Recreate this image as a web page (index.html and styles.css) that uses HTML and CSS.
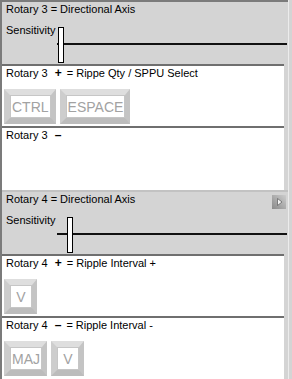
FILE: index.html
```html
<!DOCTYPE html>
<html lang="en">
<head>
<meta charset="UTF-8">
<title>Rotary mapping</title>
<link rel="stylesheet" href="styles.css">
</head>
<body>
	<div class="frame">
		<div class="panel">
			<div class="axis axis-first">
				<div class="axis-title"><span>Rotary 3 = Directional Axis</span></div>
				<div class="sens">
					<span class="sens-label">Sensitivity</span>
					<div class="slider"><span class="thumb" style="left:1px"></span></div>
				</div>
			</div>
			<div class="binding">
				<div class="binding-title">Rotary 3 <b class="sign">+</b> = Rippe Qty / SPPU Select</div>
				<div class="keys">
					<span class="key">CTRL</span>
					<span class="key">ESPACE</span>
				</div>
			</div>
			<div class="binding binding-empty">
				<div class="binding-title">Rotary 3 <b class="sign">&ndash;</b></div>
			</div>

			<div class="axis">
				<div class="axis-title">
					<span>Rotary 4 = Directional Axis</span>
					<span class="nav">
						<svg width="14" height="14" viewBox="0 0 14 14">
							<defs>
								<linearGradient id="navg" x1="0" y1="1" x2="1" y2="0">
									<stop offset="0" stop-color="#8a8a8a"/>
									<stop offset="1" stop-color="#cdcdcd"/>
								</linearGradient>
							</defs>
							<rect width="14" height="14" fill="url(#navg)"/>
							<polygon points="5.5,3.5 10,7 5.5,10.5" fill="#f2f2f2" stroke="#666" stroke-width="0.8"/>
						</svg>
					</span>
				</div>
				<div class="sens">
					<span class="sens-label">Sensitivity</span>
					<div class="slider"><span class="thumb" style="left:10px"></span></div>
				</div>
			</div>
			<div class="binding">
				<div class="binding-title">Rotary 4 <b class="sign">+</b> = Ripple Interval +</div>
				<div class="keys">
					<span class="key">V</span>
				</div>
			</div>
			<div class="binding binding-last">
				<div class="binding-title">Rotary 4 <b class="sign">&ndash;</b> = Ripple Interval -</div>
				<div class="keys">
					<span class="key">MAJ</span>
					<span class="key">V</span>
				</div>
			</div>
		</div>
		<div class="scroll"></div>
	</div>
</body>
</html>
```

FILE: styles.css
```css
* { margin: 0; padding: 0; box-sizing: border-box; }

body { background: #d4d4d4; font: 11px/13px "Liberation Sans", Arial, sans-serif; color: #000; }

.frame { display: flex; width: 292px; height: 379px; overflow: hidden; }
.panel { flex: 1; display: flex; flex-direction: column; border-left: 2px solid #7b7b7b; }
.scroll { width: 4px; border-left: 1px solid #ececec; }

/* grey axis blocks */
.axis { height: 64px; flex: none; border-top: 2px solid #c2c2c2; }
.axis-first { border-top-color: #7b7b7b; }
.axis-title { display: flex; justify-content: space-between; align-items: flex-start; height: 14px; padding: 1px 2px 0 4px; }
.nav { display: block; width: 14px; height: 14px; margin-top: 2px; }
.nav svg { display: block; }

.sens { display: flex; margin-top: 8px; margin-right: 1px; }
.sens-label { padding-left: 4px; }
.slider { flex: 1; height: 39px; position: relative; margin-left: 1px; }
.slider::before { content: ""; position: absolute; left: 0; right: 0; top: 19px; height: 2px; background: #111; }
.thumb { position: absolute; top: 3px; width: 6px; height: 36px; border: 1px solid #000; background: #fff; }

/* white key binding blocks */
.binding { height: 62px; flex: none; margin-right: 4px; padding: 1px 0 0 2px; background: #fff; border-top: 2px solid #6f6f6f; }
.binding-empty { height: 64px; }
.binding-last { flex: 1; }
.binding-title { padding-left: 2px; }
.sign { display: inline-block; margin: 0 2px 0 4px; font-weight: bold; font-size: 12px; }

.keys { display: flex; gap: 4px; margin-top: 9px; }
.key { display: flex; align-items: center; justify-content: center; height: 35px; min-width: 33px; padding: 0 2px; background: #fff;
	border-style: solid; border-width: 6px 5px 6px 6px; border-color: #dedede #c4c4c4 #bcbcbc #cdcdcd;
	box-shadow: inset 0 0 0 1px #c6c6c6; color: #a2a2a2; font-size: 14px; line-height: 1; }
```
